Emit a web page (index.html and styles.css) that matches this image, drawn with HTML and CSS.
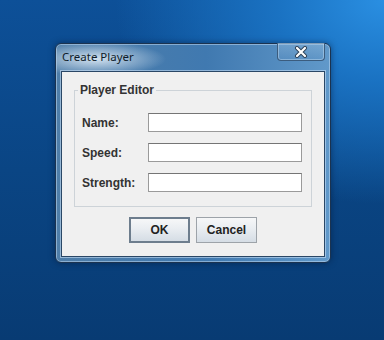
FILE: index.html
```html
<!DOCTYPE html>
<html lang="en">
<head>
<meta charset="UTF-8">
<title>Create Player</title>
<link rel="stylesheet" href="styles.css">
</head>
<body>
  <div class="window">
    <div class="titlebar">
      <span class="title">Create Player</span>
      <div class="close-btn">
        <svg width="14" height="12" viewBox="0 0 14 12">
          <path d="M3 2 L11 10 M11 2 L3 10" stroke="#2b3f55" stroke-width="4" stroke-linecap="round"/>
          <path d="M3 2 L11 10 M11 2 L3 10" stroke="#ffffff" stroke-width="2.2" stroke-linecap="round"/>
        </svg>
      </div>
    </div>
    <div class="client">
      <fieldset class="group">
        <legend>Player Editor</legend>
        <div class="row">
          <label>Name:</label>
          <input type="text" class="field">
        </div>
        <div class="row">
          <label>Speed:</label>
          <input type="text" class="field">
        </div>
        <div class="row">
          <label>Strength:</label>
          <input type="text" class="field">
        </div>
      </fieldset>
      <div class="buttons">
        <button class="btn btn-default">OK</button>
        <button class="btn">Cancel</button>
      </div>
    </div>
  </div>
</body>
</html>
```
FILE: styles.css
```css
html, body { height: 100%; }
body {
  margin: 0;
  overflow: hidden;
  font-family: "Liberation Sans", Arial, sans-serif;
  background:
    radial-gradient(ellipse 70% 60% at 100% 0%, #2a8fe2 0%, #1a72c2 40%, rgba(20, 95, 170, 0) 100%),
    linear-gradient(180deg, #0d5098 0%, #0a4584 50%, #083b73 100%);
}
.window {
  width: 276px;
  height: 220px;
  box-sizing: border-box;
  margin: 43px 0 0 55px;
  border: 1px solid #1b3350;
  border-radius: 6px;
  padding: 0 5px 5px;
  display: flex;
  flex-direction: column;
  background:
    radial-gradient(ellipse 70px 17px at 40px 15px, rgba(225, 236, 246, 0.9), rgba(225, 236, 246, 0)),
    linear-gradient(90deg, #4f7ea9 0%, #4079b0 55%, #6199ca 100%);
  box-shadow: inset 0 0 0 1px rgba(190, 215, 240, 0.55), 0 0 6px rgba(0, 20, 50, 0.5);
}
.titlebar {
  height: 27px;
  display: flex;
  justify-content: space-between;
  align-items: flex-start;
}
.title {
  font-family: "Noto Sans", sans-serif;
  font-size: 11.5px;
  color: #0f1c2a;
  margin: 5px 0 0 1px;
}
.close-btn {
  width: 48px;
  height: 18px;
  box-sizing: border-box;
  margin-top: -1px;
  border: 1px solid #3b5c7e;
  border-top: none;
  border-radius: 0 0 4px 4px;
  box-shadow: inset 0 0 0 1px rgba(200, 225, 245, 0.45);
  background: linear-gradient(180deg, rgba(160, 195, 225, 0.35), rgba(90, 140, 190, 0.2));
  display: flex;
  align-items: center;
  justify-content: center;
}
.close-btn svg { margin-top: 1px; }
.client {
  flex: 1;
  background: #f0f0f0;
  border: 1px solid #2a4766;
  box-shadow: 0 0 0 1px rgba(210, 230, 250, 0.55);
  padding: 11px 12px 13px;
}
.group {
  margin: 0;
  border: 1px solid #cdd3d8;
  padding: 16px 9px 14px 7px;
}
.group legend {
  font-size: 12px;
  font-weight: bold;
  color: #333;
  line-height: 14px;
  padding: 0 2px;
  margin-left: -4px;
}
.row {
  display: flex;
  align-items: center;
  margin-bottom: 11px;
}
.row:last-child { margin-bottom: 0; }
.row label {
  width: 66px;
  font-size: 12px;
  font-weight: bold;
  color: #333;
}
.field {
  width: 154px;
  height: 19px;
  box-sizing: border-box;
  margin: 0;
  border: 1px solid #9a9a9a;
  border-top-color: #757575;
  background: #fff;
  padding: 0 3px;
}
.buttons {
  display: flex;
  justify-content: center;
  gap: 6px;
  margin-top: 10px;
}
.btn {
  width: 61px;
  height: 26px;
  box-sizing: border-box;
  border: 1px solid #9da3a9;
  background: linear-gradient(180deg, #f6f7f8 0%, #e9edf1 45%, #d5dde5 100%);
  font-family: "Liberation Sans", Arial, sans-serif;
  font-size: 12px;
  font-weight: bold;
  color: #222;
  padding: 0;
}
.btn-default {
  border: 2px solid #6d7d8d;
}
```
